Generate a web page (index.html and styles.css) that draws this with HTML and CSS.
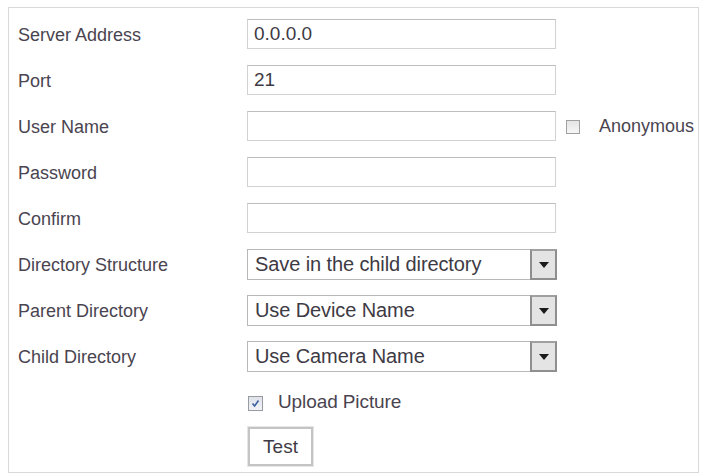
FILE: index.html
```html
<!DOCTYPE html>
<html>
<head>
<meta charset="utf-8">
<link rel="stylesheet" href="styles.css">
</head>
<body>
<div class="panel">
  <div class="form">
    <div class="label">Server Address</div>
    <div class="field"><div class="input">0.0.0.0</div></div>

    <div class="label">Port</div>
    <div class="field"><div class="input">21</div></div>

    <div class="label">User Name</div>
    <div class="field">
      <div class="input"></div>
      <span class="check anon"></span>
      <span class="anon-text">Anonymous</span>
    </div>

    <div class="label">Password</div>
    <div class="field"><div class="input"></div></div>

    <div class="label">Confirm</div>
    <div class="field"><div class="input"></div></div>

    <div class="label">Directory Structure</div>
    <div class="field">
      <div class="select"><span class="sel-text">Save in the child directory</span><span class="arrow"><span class="tri"></span></span></div>
    </div>

    <div class="label">Parent Directory</div>
    <div class="field">
      <div class="select"><span class="sel-text">Use Device Name</span><span class="arrow"><span class="tri"></span></span></div>
    </div>

    <div class="label">Child Directory</div>
    <div class="field">
      <div class="select"><span class="sel-text">Use Camera Name</span><span class="arrow"><span class="tri"></span></span></div>
    </div>

    <div class="label"></div>
    <div class="field">
      <span class="check checked">
        <svg width="9" height="9" viewBox="0 0 9 9"><path d="M1.5 4.5 L3.6 7 L7.5 1.5" fill="none" stroke="#3b5f9e" stroke-width="1.6"/></svg>
      </span>
      <span class="upload-text">Upload Picture</span>
    </div>

    <div class="label"></div>
    <div class="field btn-row"><div class="button">Test</div></div>
  </div>
</div>
</body>
</html>
```

FILE: styles.css
```css
html, body {
  margin: 0;
  padding: 0;
  background: #ffffff;
}
body {
  font-family: "Liberation Sans", Arial, sans-serif;
  color: #454048;
}
.panel {
  margin: 7px 0 0 8px;
  width: 689px;
  height: 464px;
  border: 1px solid #d9d9d9;
  box-sizing: content-box;
}
.form {
  display: grid;
  grid-template-columns: 229px auto;
  grid-auto-rows: 30px;
  row-gap: 16px;
  padding: 11px 0 0 9px;
}
.label {
  font-size: 18px;
  display: flex;
  align-items: center;
  padding-top: 2px;
  color: #4a4450;
}
.field {
  display: flex;
  align-items: center;
}
.input {
  width: 309px;
  height: 30px;
  box-sizing: border-box;
  border: 1px solid #d2d2d2;
  border-top-color: #bdbdbd;
  font-size: 19px;
  line-height: 28px;
  padding-left: 6px;
  color: #3e3a44;
}
.check {
  width: 14px;
  height: 14px;
  box-sizing: border-box;
  border: 1px solid #a0a0a0;
  background: linear-gradient(#e4e4e4, #f6f6f6);
  display: inline-flex;
  align-items: center;
  justify-content: center;
}
.anon {
  margin-left: 10px;
  margin-top: 2px;
}
.anon-text {
  margin-left: 19px;
  font-size: 18px;
  color: #4a4450;
}
.select {
  width: 310px;
  height: 31px;
  box-sizing: border-box;
  border: 1px solid #b8b8b8;
  display: flex;
  align-items: stretch;
  margin-top: 1px;
}
.sel-text {
  flex: 1;
  font-size: 20px;
  line-height: 29px;
  padding-left: 7px;
  color: #3e3a44;
  letter-spacing: -0.1px;
}
.arrow {
  width: 27px;
  box-sizing: border-box;
  border: 2px solid #8f8f8f;
  border-top-color: #a0a0a0;
  background: #e4e4e4;
  display: flex;
  align-items: center;
  justify-content: center;
  margin: -1px -1px -1px 0;
}
.tri {
  width: 0;
  height: 0;
  border-left: 5px solid transparent;
  border-right: 5px solid transparent;
  border-top: 6px solid #1a1a1a;
}
.checked {
  width: 15px;
  height: 15px;
  margin-left: 1px;
  margin-top: 2px;
  background: linear-gradient(#dfe3ea, #f0f2f6);
  border-color: #9a9aa2;
}
.upload-text {
  margin-left: 15px;
  font-size: 19px;
  letter-spacing: -0.1px;
  color: #4a4450;
}
.btn-row {
  align-items: flex-start;
  margin-top: -6px;
}
.button {
  width: 65px;
  height: 39px;
  box-sizing: border-box;
  border: 2px solid #c4c4c4;
  outline: 1px solid #e6e6e6;
  margin-left: 1px;
  font-size: 19px;
  display: flex;
  align-items: center;
  justify-content: center;
  color: #3e3a44;
  background: #fff;
}
```
